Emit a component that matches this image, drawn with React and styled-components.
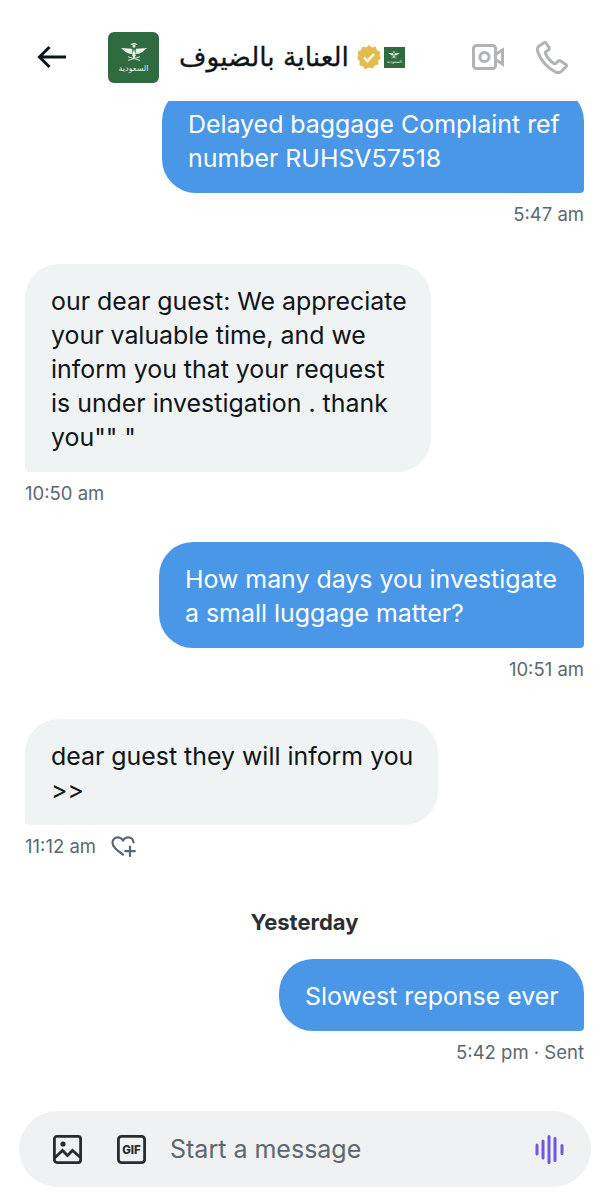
import React from "react";
import styled, { createGlobalStyle } from "styled-components";

const GlobalStyle = createGlobalStyle`
  html, body {
    margin: 0;
    padding: 0;
    background: #fff;
  }
  body {
    font-family: Inter, "Noto Sans", "DejaVu Sans", sans-serif;
  }
`;

const Screen = styled.div`
  display: flex;
  flex-direction: column;
  width: 610px;
  height: 1200px;
  overflow: hidden;
  background: #fff;
`;

const Header = styled.header`
  display: flex;
  align-items: center;
  flex: none;
  height: 101px;
  padding: 13px 42px 0 37px;
  box-sizing: border-box;
`;

const BackButton = styled.div`
  display: flex;
  width: 29px;
  margin-right: 42px;
  color: #0f1419;
`;

const Avatar = styled.div`
  display: flex;
  align-items: center;
  justify-content: center;
  flex-direction: column;
  flex: none;
  width: 51px;
  height: 51px;
  border-radius: 6px;
  background: #2f6b3f;
  color: #e9f1ea;
`;

const AvatarLabel = styled.span`
  font-family: "DejaVu Sans", sans-serif;
  font-size: 8px;
  line-height: 9px;
  margin-top: 2px;
`;

const Title = styled.div`
  margin-left: 20px;
  font-family: "DejaVu Sans", sans-serif;
  font-size: 26.5px;
  line-height: 34px;
  color: #0f1419;
  -webkit-text-stroke: 0.3px #0f1419;
  white-space: nowrap;
`;

const Badge = styled.div`
  display: flex;
  margin-left: 8px;
`;

const TinyLogo = styled.div`
  display: flex;
  align-items: center;
  justify-content: center;
  flex-direction: column;
  width: 21px;
  height: 21px;
  margin-left: 3px;
  background: #2f6b3f;
  color: #e9f1ea;
`;

const TinyLabel = styled.span`
  font-family: "DejaVu Sans", sans-serif;
  font-size: 4px;
  line-height: 5px;
`;

const HeaderActions = styled.div`
  display: flex;
  align-items: center;
  gap: 32px;
  margin-left: auto;
  color: #b1b3b5;
`;

const Messages = styled.main`
  display: flex;
  flex: 1;
  flex-direction: column;
  min-height: 0;
  overflow: hidden;
  padding: 0 26px 0 25px;
`;

const Group = styled.div`
  display: flex;
  flex-direction: column;
  align-items: ${(p) => (p.$mine ? "flex-end" : "flex-start")};
  margin-top: ${(p) => p.$top}px;
`;

const Bubble = styled.div`
  box-sizing: border-box;
  width: ${(p) => p.$width}px;
  padding: 20px ${(p) => (p.$mine ? 20 : 24)}px 18px 26px;
  border-radius: ${(p) => (p.$mine ? "34px 34px 4px 34px" : "34px 34px 34px 4px")};
  background: ${(p) => (p.$mine ? "#4a97e8" : "#eff3f4")};
  color: ${(p) => (p.$mine ? "#fff" : "#0f1419")};
  font-size: 24.9px;
  line-height: 34px;
`;

const Meta = styled.div`
  display: flex;
  align-items: center;
  gap: 15px;
  height: 20px;
  margin-top: 11px;
  color: #5d6770;
  font-size: 18.5px;
  line-height: 20px;
`;

const DayLabel = styled.div`
  margin-top: 52px;
  text-align: center;
  color: #2a2f34;
  font-size: 22px;
  font-weight: 700;
  line-height: 28px;
`;

const Composer = styled.footer`
  display: flex;
  align-items: center;
  flex: none;
  height: 76px;
  margin: 0 19px 13px;
  padding: 0 27px 0 34px;
  border-radius: 38px;
  background: #eff1f3;
`;

const ComposerIcon = styled.div`
  display: flex;
  margin-right: ${(p) => p.$gap}px;
  color: #272c30;
`;

const Placeholder = styled.div`
  flex: 1;
  color: #5f666d;
  font-size: 25px;
`;

// airline emblem: palm crown over spread wings and crossed swords
const Emblem = ({ size }) => (
  <svg width={size} height={size * 0.76} viewBox="0 0 30 23" fill="currentColor">
    <path d="M11 4.500C12 1.500 18 1.500 19 4.500 17.500 3.400 12.500 3.400 11 4.500z" />
    <circle cx="15" cy="5.500" r="1.700" />
    <path d="M1 7.500 13 8.500 13.500 14 9 13.500 5.500 11.500z" />
    <path d="M29 7.500 17 8.500 16.500 14 21 13.500 24.500 11.500z" />
    <path d="M15 8.500 16.800 15.500 15 20 13.200 15.500z" />
    <path d="M8.500 17 21.500 21M21.500 17 8.500 21" stroke="currentColor" strokeWidth="1" fill="none" />
  </svg>
);

const ArrowLeft = () => (
  <svg width="29" height="24" viewBox="0 0 29 24" fill="none" stroke="currentColor" strokeWidth="3">
    <path d="M29 12H2.500M12.500 2 2.500 12l10 10" />
  </svg>
);

const VerifiedBadge = () => (
  <svg width="24" height="24" viewBox="0 0 24 24">
    <path
      fill="#e3bb4f"
      d="M12 0l3 2.400 3.700-.8 1.200 3.600 3.500 1.500-.9 3.700L24 13l-2.800 2.600.4 3.800-3.700.8-2 3.200L12 22.600l-3.900 1.800-2-3.200-3.700-.8.4-3.800L0 13l1.500-2.600-.9-3.700 3.500-1.500 1.200-3.600L9 2.400z"
    />
    <path d="M7 12.500l3.500 3.500L17 9" fill="none" stroke="#fff" strokeWidth="2.400" />
  </svg>
);

const VideoIcon = () => (
  <svg width="32" height="26" viewBox="0 0 32 26" fill="none" stroke="currentColor" strokeWidth="3">
    <rect x="1.500" y="1.500" width="22" height="23" rx="3" />
    <circle cx="12.500" cy="13" r="4.600" />
    <path d="M23.500 10.500l7-4.500v14l-7-4.500" />
  </svg>
);

const PhoneIcon = () => (
  <svg width="32" height="33" viewBox="0 0 32 33" fill="none" stroke="currentColor" strokeWidth="3" strokeLinejoin="round">
    <path d="M8 1.800 2.800 5.200C1.200 6.400 1.200 9 2 11.500c2.200 7 9.800 16 17.500 19.500 2.500 1 4.700.6 6-.7l4.600-4.600c.6-.7.5-1.600-.2-2.200l-5.400-3.600c-.8-.5-1.600-.4-2.300.2l-2.300 2.200c-.6.5-1.300.6-2 .2-3.600-2.200-6.800-6-8.400-9.800-.3-.8-.1-1.500.5-2l2.600-2c.7-.6.9-1.400.5-2.200L10.400 2.500C9.800 1.500 8.900 1.300 8 1.800z" />
  </svg>
);

const ImageIcon = () => (
  <svg width="29" height="29" viewBox="0 0 29 29" fill="none" stroke="currentColor" strokeWidth="2.800">
    <rect x="1.400" y="1.400" width="26.200" height="26.200" rx="2.500" />
    <circle cx="10" cy="9" r="2.600" fill="currentColor" stroke="none" />
    <path d="M1.500 23 9.500 15.500l5 5 5-5 8 7" />
  </svg>
);

const GifIcon = () => (
  <svg width="29" height="29" viewBox="0 0 29 29">
    <rect x="1.400" y="1.400" width="26.200" height="26.200" rx="3" fill="none" stroke="currentColor" strokeWidth="2.800" />
    <text
      x="14.500"
      y="18.800"
      textAnchor="middle"
      fontFamily="Inter, sans-serif"
      fontSize="11.500"
      fontWeight="800"
      fill="currentColor"
    >
      GIF
    </text>
  </svg>
);

const HeartPlus = () => (
  <svg width="25" height="21" viewBox="0 0 25 21" fill="none" stroke="#5d6770" strokeWidth="2.200" strokeLinecap="round">
    <path d="M12 18.500C6.500 15 1.500 11.500 1.500 6.800 1.500 3.600 3.800 1.300 6.700 1.300c2.300 0 4.100 1.100 5.300 3 1.200-1.900 3-3 5.300-3 2.900 0 5 2.200 5.200 5.200" />
    <path d="M19 10.500v9.500M14.200 15.200h9.600" />
  </svg>
);

const VoiceIcon = () => (
  <svg width="29" height="29" viewBox="0 0 29 29" fill="none" stroke="#7556de" strokeWidth="3" strokeLinecap="round">
    <path d="M2 10v9M8 6v17M14 1.500v26M20 3.500v22M27 10.500v8" />
  </svg>
);

export default function App() {
  return (
    <Screen>
      <GlobalStyle />
      <Header>
        <BackButton>
          <ArrowLeft />
        </BackButton>
        <Avatar>
          <Emblem size={28} />
          <AvatarLabel>السعودية</AvatarLabel>
        </Avatar>
        <Title dir="rtl">العناية بالضيوف</Title>
        <Badge>
          <VerifiedBadge />
        </Badge>
        <TinyLogo>
          <Emblem size={12} />
          <TinyLabel>السعودية</TinyLabel>
        </TinyLogo>
        <HeaderActions>
          <VideoIcon />
          <PhoneIcon />
        </HeaderActions>
      </Header>

      <Messages>
        <Group $mine $top={-14}>
          <Bubble $mine $width={422}>
            Delayed baggage Complaint ref number RUHSV57518
          </Bubble>
          <Meta>5:47 am</Meta>
        </Group>

        <Group $top={40}>
          <Bubble $width={406}>
            our dear guest: We appreciate your valuable time, and we inform you that your request is under
            investigation . thank you"" "
          </Bubble>
          <Meta>10:50 am</Meta>
        </Group>

        <Group $mine $top={39}>
          <Bubble $mine $width={425}>
            How many days you investigate a small luggage matter?
          </Bubble>
          <Meta>10:51 am</Meta>
        </Group>

        <Group $top={40}>
          <Bubble $width={413}>dear guest they will inform you &gt;&gt;</Bubble>
          <Meta>
            11:12 am
            <HeartPlus />
          </Meta>
        </Group>

        <DayLabel>Yesterday</DayLabel>

        <Group $mine $top={23}>
          <Bubble $mine $width={305}>
            Slowest reponse ever
          </Bubble>
          <Meta>5:42 pm · Sent</Meta>
        </Group>
      </Messages>

      <Composer>
        <ComposerIcon $gap={35}>
          <ImageIcon />
        </ComposerIcon>
        <ComposerIcon $gap={24}>
          <GifIcon />
        </ComposerIcon>
        <Placeholder>Start a message</Placeholder>
        <VoiceIcon />
      </Composer>
    </Screen>
  );
}
